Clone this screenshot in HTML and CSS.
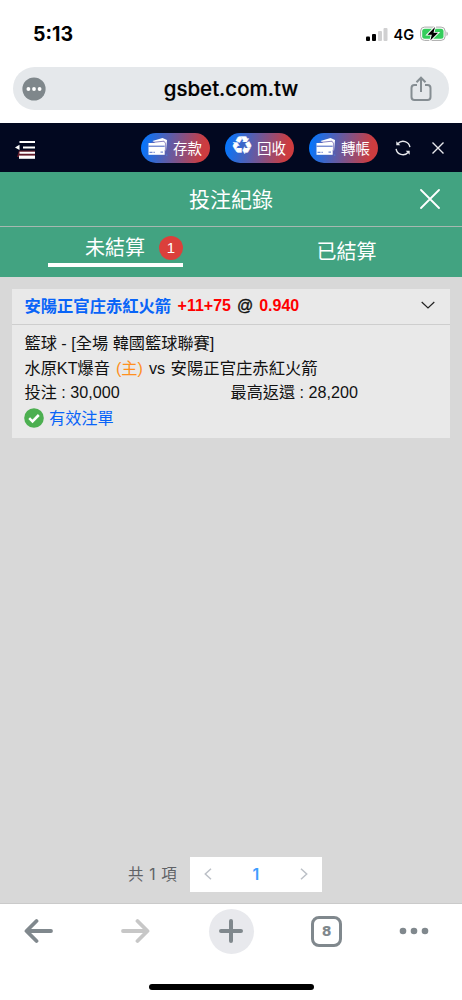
FILE: index.html
```html
<!DOCTYPE html>
<html lang="zh-Hant">
<head>
<meta charset="utf-8">
<meta name="viewport" content="width=device-width, initial-scale=1">
<title>投注紀錄</title>
<link rel="stylesheet" href="styles.css">
</head>
<body>
<svg width="0" height="0" class="defs">
  <symbol id="cards" viewBox="0 0 20 18">
    <path d="M4.500 3 14.500 0 19 2 18 13z" fill="#fff"/>
    <path d="M3.500 4.500 16 3.200 17.300 5v9" stroke="#685fae" stroke-width=".8" fill="none"/>
    <path d="M.5 5H16.700v11.800H.5z" fill="#fff"/>
    <path d="M.5 8.200h16.200" stroke="#405fc0" stroke-width="1"/>
    <path d="M1.500 14.300h3M5.500 14.300h1.300M12.500 14.100h2.500" stroke="#405fc0" stroke-width=".9"/>
    <circle cx="18.800" cy="17" r=".5" fill="#4da1ff"/>
  </symbol>
</svg>
<header class="browser-head">
  <div class="status">
    <span class="time">5:13</span>
    <div class="indicators">
      <svg width="22" height="14" viewBox="0 0 22 14"><rect x="0" y="9.500" width="4" height="4.500" rx="1"/><rect x="6" y="7" width="4" height="7" rx="1"/><rect x="12" y="4" width="4" height="10" rx="1" fill="#d0d0d1"/><rect x="17.500" y="1" width="4" height="13" rx="1" fill="#d0d0d1"/></svg>
      <span class="network">4G</span>
      <svg width="29" height="16" viewBox="0 0 29 16"><rect x=".6" y="1.100" width="24.500" height="13.300" rx="4" fill="#fff" stroke="#aaa"/><rect x="2.200" y="2.800" width="21.300" height="10" rx="2.500" fill="#35cd5c"/><path d="M26.500 5.500c1.800.8 1.800 3.800 0 4.600z" fill="#aaa"/><path d="M15 1 7.500 8.700h4.300L10.300 14.500 18 6.800h-4.500z" stroke="#fff" stroke-width="1.800" paint-order="stroke"/></svg>
    </div>
  </div>
  <div class="address">
    <svg width="24" height="24" viewBox="0 0 24 24"><circle cx="12" cy="12" r="11.600" fill="#7f878b"/><g fill="#fff"><circle cx="6.400" cy="12" r="1.900"/><circle cx="12" cy="12" r="1.900"/><circle cx="17.600" cy="12" r="1.900"/></g></svg>
    <span class="url">gsbet.com.tw</span>
    <svg width="22" height="26" viewBox="0 0 22 26" fill="none" stroke="#858d92" stroke-width="2"><path d="M7 9H4.500A3 3 0 0 0 1.500 12v9a3 3 0 0 0 3 3h13a3 3 0 0 0 3-3v-9a3 3 0 0 0-3-3H15M11 16V2M6.500 6.200 11 1.700l4.500 4.500"/></svg>
  </div>
</header>
<nav class="site-bar">
  <svg class="menu" width="22" height="22" viewBox="0 0 22 22"><path d="M4 11.500h16V18H2z" fill="#621c2a"/><path d="M4.500 3H20M8 8.400h12M4.500 13.800H20" stroke="#fff" stroke-width="2"/><path d="M4 18.200H20" stroke="#fff" stroke-width="3.200"/><path d="M0 8.400 4.500 5.800V11z" fill="#fff"/></svg>
  <div class="pills">
    <span class="pill"><svg width="20" height="18"><use href="#cards"/></svg>存款</span>
    <span class="pill"><span class="recycle">♻</span>回收</span>
    <span class="pill"><svg width="20" height="18"><use href="#cards"/></svg>轉帳</span>
  </div>
  <svg class="refresh" width="16" height="16" viewBox="0 0 16 16" fill="none" stroke="#e8e9ed" stroke-width="1.400"><path d="M3 3.500A6.900 6.900 0 0 1 14.900 7.200M13 12.500A6.900 6.900 0 0 1 1.100 8.800"/><path d="M1.300 1.300v3.900h4zM14.700 14.700v-3.900h-4z" fill="#e8e9ed" stroke="none"/></svg>
  <svg class="bar-close" width="12" height="12" viewBox="0 0 12 12"><path d="m.5.5 11 11m0-11-11 11" stroke="#e8e9ed" stroke-width="1.400"/></svg>
</nav>
<section class="title-bar">
  <h1>投注紀錄</h1>
  <svg class="title-close" width="20" height="20" viewBox="0 0 20 20"><path d="m1 1 18 18m0-18L1 19" stroke="#fff" stroke-width="1.800" stroke-linecap="round"/></svg>
</section>
<section class="tabs">
  <div class="tab active"><div class="tab-label">未結算<span class="badge">1</span></div></div>
  <div class="tab">已結算</div>
</section>
<main>
  <article class="bet">
    <header class="bet-head"><span class="team">安陽正官庄赤紅火箭</span><span class="red spread">+11+75</span><span class="at">@</span><span class="red">0.940</span>
      <svg class="chevron" width="14" height="9" viewBox="0 0 14 9"><path d="m.7 1 6.300 6 6.300-6" fill="none" stroke="#222" stroke-width="1.200"/></svg></header>
    <div class="bet-body">
      <div>籃球 - [全場 韓國籃球聯賽]</div>
      <div>水原KT爆音 <span class="home">(主)</span> vs <span class="away">安陽正官庄赤紅火箭</span></div>
      <div class="amounts"><span>投注 : 30,000</span><span>最高返還 : 28,200</span></div>
      <div class="valid"><svg width="20" height="20" viewBox="0 0 20 20"><circle cx="10" cy="10" r="9.800" fill="#4caf50"/><path d="m5.200 10.200 3.300 3.200L14.800 7" fill="none" stroke="#fff" stroke-width="2.500"/></svg>有效注單</div>
    </div>
  </article>
  <div class="pagination"><span class="total">共 1 項</span>
    <div class="pager"><svg width="8" height="12" viewBox="0 0 8 12"><path d="M7 .8 1.300 6 7 11.200"/></svg><b>1</b><svg width="8" height="12" viewBox="0 0 8 12"><path d="M1 .8 6.700 6 1 11.200"/></svg></div>
  </div>
</main>
<footer>
  <div class="tools">
    <svg width="30" height="26" viewBox="0 0 30 26" fill="none" stroke="#80888d" stroke-width="3.800" stroke-linecap="round" stroke-linejoin="round"><path d="M27 13H3M12.500 3 2.500 13l10 10"/></svg>
    <svg width="30" height="26" viewBox="0 0 30 26" fill="none" stroke="#c7c7c7" stroke-width="3.800" stroke-linecap="round" stroke-linejoin="round"><path d="M3 13h24M17.500 3l10 10-10 10"/></svg>
    <span class="new-tab"><svg width="24" height="24" viewBox="0 0 24 24"><path d="M2 12h20M12 2v20" stroke="#80888d" stroke-width="4" stroke-linecap="round"/></svg></span>
    <span class="tab-count">8</span>
    <svg width="30" height="10" viewBox="0 0 30 10" fill="#80888d"><circle cx="4" cy="5" r="3.300"/><circle cx="15" cy="5" r="3.300"/><circle cx="26" cy="5" r="3.300"/></svg>
  </div>
  <div class="home-bar"></div>
</footer>
</body>
</html>
```
FILE: styles.css
```css
* { box-sizing: border-box; }
body { margin: 0; width: 462px; height: 1000px; display: flex; flex-direction: column; overflow: hidden; background: #fff; color: #111; font-family: "Liberation Sans", "Noto Sans CJK TC", sans-serif; }
svg { display: block; flex: none; }
.defs { position: absolute; }
.browser-head { height: 123px; flex: none; padding: 0 13px; }
.status { height: 67px; display: flex; justify-content: space-between; padding: 21px 0 0 20px; font-family: Inter, sans-serif; color: #000; }
.time { font-size: 19.500px; line-height: 26px; font-weight: 700; }
.indicators { display: flex; height: 26px; align-items: center; }
.network { font-size: 14.500px; font-weight: 600; margin: 0 6px 0 5px; }
.address { height: 43px; border-radius: 22px; background: #e5e8eb; display: flex; align-items: center; padding: 0 17px 0 9px; }
.url { flex: 1; text-align: center; padding-left: 6px; font: 500 20.500px/43px Inter, sans-serif; color: #000; -webkit-text-stroke: .2px #000; }
.site-bar { height: 49px; flex: none; background: #020820; display: flex; align-items: center; padding: 0 18px 0 15px; }
.menu { margin-top: 4px; }
.pills { display: flex; gap: 15px; margin-left: 104px; }
.pill { width: 69px; height: 30px; border-radius: 15px; background: linear-gradient(100deg, #0875fa 5%, #cd3c3f 88%); display: flex; align-items: center; padding-left: 7px; color: #fff; font-size: 14.500px; gap: 5px; white-space: nowrap; }
.pill svg { margin-top: -2px; }
.recycle { width: 20px; font: 25px/20px "DejaVu Sans", sans-serif; margin-top: -4px; display: flex; justify-content: center; -webkit-text-stroke: .3px #fff; }
.refresh { margin-left: 17px; }
.bar-close { margin-left: auto; }
.title-bar { height: 55px; flex: none; background: #42a381; border-bottom: 1px solid #a7b8b1; position: relative; display: flex; justify-content: center; align-items: center; color: #fff; }
h1 { margin: 0; padding-top: 1px; font-size: 21px; font-weight: 400; line-height: 30px; }
.title-close { position: absolute; right: 22px; top: 17px; }
.tabs { height: 50px; flex: none; background: #42a381; display: grid; grid-template-columns: 1fr 1fr; color: #fff; font-size: 20px; }
.tab { line-height: 50px; text-align: center; }
.active { padding: 3px 48px 0; line-height: 34px; }
.tab-label { height: 37px; border-bottom: 4px solid #fff; padding-top: 3px; display: flex; justify-content: flex-end; align-items: center; gap: 14px; white-space: nowrap; }
.badge { width: 24px; height: 24px; border-radius: 50%; background: #db403b; text-align: center; font-size: 15px; line-height: 24px; }
main { flex: 1; background: #d8d8d8; padding: 12px 12px 11px; display: flex; flex-direction: column; border-bottom: 1px solid #cacaca; }
.bet { height: 149px; background: #e9e9e9; }
.bet-head { height: 36px; border-bottom: 1px solid #cecece; padding: 0 15px 1.500px 12.500px; display: flex; align-items: center; font-size: 16px; line-height: 24px; font-weight: 700; white-space: nowrap; }
.team { color: #0864f8; font-size: 16.300px; font-weight: 700; }
.red { color: #f00; }
.spread { margin-left: 6.500px; }
.at { margin: 0 6px; font-weight: 400; -webkit-text-stroke: .4px #111; }
.chevron { margin: -1px 0 0 auto; }
.bet-body { padding: 6px 12.500px; font-size: 16.200px; line-height: 24.700px; white-space: nowrap; }
.home { color: #ff901e; margin: 0 1.500px; }
.away { font-size: 16.350px; margin-left: 1px; }
.amounts { display: grid; grid-template-columns: 206px 1fr; font-size: 16.150px; }
.valid { display: flex; align-items: center; gap: 5px; line-height: 27px; color: #0864f8; }
.valid svg { margin-left: -.5px; margin-top: -1px; }
.pagination { margin-top: auto; height: 35px; display: flex; align-items: center; padding-left: 116px; font-family: Inter, "Noto Sans CJK TC", sans-serif; font-size: 15.500px; }
.total { color: #606266; width: 62px; white-space: nowrap; letter-spacing: .7px; padding-bottom: 3px; }
.pager { width: 132px; height: 35px; background: #fff; display: flex; justify-content: space-between; align-items: center; padding: 0 14px 2px; }
.pager path { fill: none; stroke: #bcc0c7; stroke-width: 1.500; }
.pager b { color: #409eff; font-weight: 600; font-size: 16px; }
footer { height: 96px; flex: none; background: #fff; padding-top: 4px; }
.tools { height: 46px; display: grid; grid-template-columns: 96px 88.500px 102.500px 88px 30px; align-items: center; padding-left: 24px; }
.new-tab { width: 45px; height: 45px; border-radius: 50%; background: #e8e9ed; display: grid; place-items: center; }
.tab-count { width: 31px; height: 31px; border: 3px solid #80888d; border-radius: 8px; color: #80888d; text-align: center; font: 700 14px/25px "DejaVu Sans", sans-serif; }
.home-bar { width: 165px; height: 6px; border-radius: 3px; background: #000; margin: 30px auto 0; }
```
